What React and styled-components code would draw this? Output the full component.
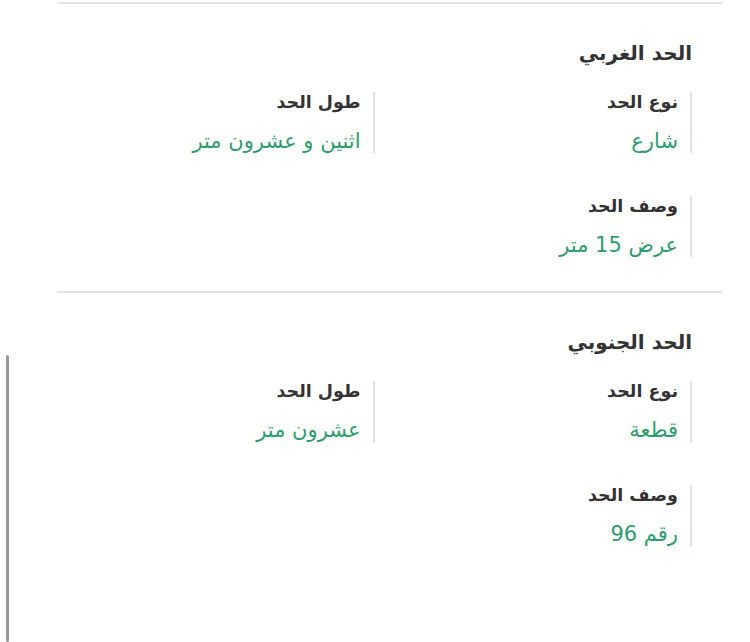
import React from 'react'
import styled, { createGlobalStyle } from 'styled-components';

const GlobalStyle = createGlobalStyle`
  html, body {
    margin: 0;
    padding: 0;
    background: #fff;
    overflow: hidden;
  }
  body {
    font-family: "DejaVu Sans", "Noto Sans", sans-serif;
  }
`;

const borders = [
    {
        title: 'الحد الغربي',
        fields: [
            { label: 'نوع الحد', value: 'شارع' },
            { label: 'طول الحد', value: 'اثنين و عشرون متر' },
            { label: 'وصف الحد', value: 'عرض 15 متر' },
        ],
    },
    {
        title: 'الحد الجنوبي',
        fields: [
            { label: 'نوع الحد', value: 'قطعة' },
            { label: 'طول الحد', value: 'عشرون متر' },
            { label: 'وصف الحد', value: 'رقم 96' },
        ],
    },
];

function App() {
    return (
        <Page dir="rtl">
            <GlobalStyle />
            {borders.map((b, i) => (
                <Section key={i}>
                    <Title>{b.title}</Title>
                    <Grid>
                        {b.fields.map((f, j) => (
                            <Field key={j}>
                                <Label>{f.label}</Label>
                                <Value>{f.value}</Value>
                            </Field>
                        ))}
                    </Grid>
                </Section>
            ))}
            <ScrollThumb />
        </Page>
    )
}

export default App

const Page = styled.div`
  margin: 2px 28px 0 57px;
  min-height: 640px;
`;

const Section = styled.section`
  border-top: 2px solid #e4e4e4;
  padding: 34px 30px 0 0;
  height: 289px;
  box-sizing: border-box;
`;

const Title = styled.h2`
  margin: 0 0 24px;
  font-size: 20px;
  font-weight: 700;
  color: #333;
  line-height: 30px;
`;

const Grid = styled.div`
  display: grid;
  grid-template-columns: 1fr 1fr;
  row-gap: 43px;
`;

const Field = styled.div`
  border-right: 2px solid #e0e0e0;
  padding-right: 12px;
  display: flex;
  flex-direction: column;
  gap: 17px;
`;

const Label = styled.div`
  font-size: 17.5px;
  font-weight: 700;
  color: #333;
  line-height: 20px;
`;

const Value = styled.div`
  font-size: 21px;
  color: #2b9d6d;
  line-height: 24px;
`;

const ScrollThumb = styled.div`
  position: fixed;
  left: 6px;
  top: 355px;
  bottom: 0;
  width: 3px;
  border-radius: 2px;
  background: #9a9a9a;
`;
